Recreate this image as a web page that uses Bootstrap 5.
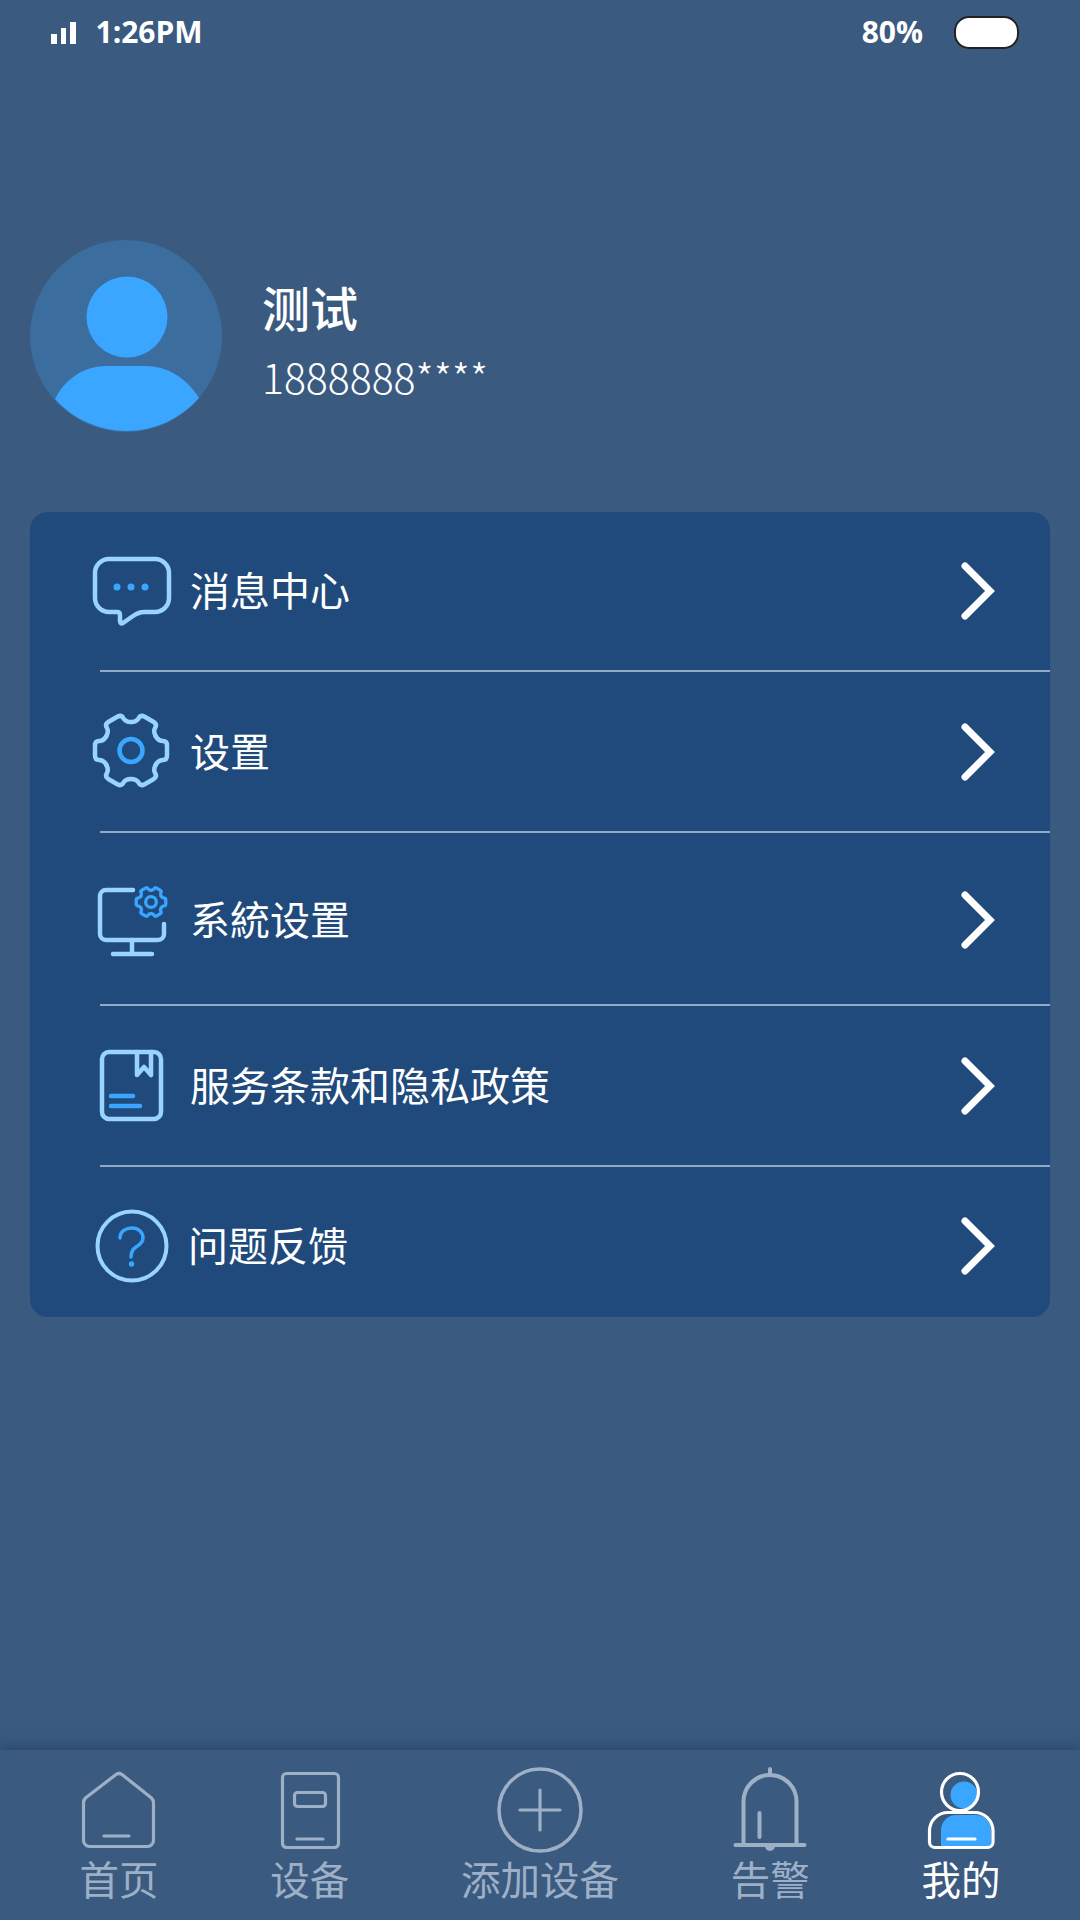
<!DOCTYPE html>
<html lang="zh-CN">
<head>
<meta charset="utf-8">
<title>我的</title>
<link href="https://cdn.jsdelivr.net/npm/bootstrap@5.3.0/dist/css/bootstrap.min.css" rel="stylesheet">
<style>
html,body{margin:0;padding:0}
body{width:1080px;height:1920px;background:#3a5a80;color:#fff;font-family:"Noto Sans CJK SC","Noto Sans",sans-serif;overflow:hidden}
.status-strip{height:62px;padding:2px 61px 0 51px;font-family:"Open Sans","Noto Sans",sans-serif;font-weight:700;font-size:30px;line-height:1}
.sig-bars{height:22px;gap:4px;margin-right:20px;margin-top:1px}
.sig-bars i{display:block;width:5.5px;background:#fff}
.sig-a{height:10px}.sig-b{height:16px}.sig-c{height:22px}
.batt{width:65px;height:33px;background:#fff;border:2px solid #222;border-radius:15px;margin-left:31px}
.profile{margin:178px 30px 0;height:192px}
.avatar-svg{display:block;flex:none}
.who{margin-left:40px;padding-top:6px}
.who-name{font-size:48px;font-weight:500;line-height:58px;margin-top:0}
.who-tel{font-size:41px;font-weight:300;line-height:50px;margin-top:16px}
.menu-panel{margin:80px 30px 0;background:#204a7b;border-radius:18px;overflow:hidden}
.menu-row{padding:0 50px 0 60px}
.h-top{height:158px}.h-a{height:159px}.h-b{height:171px;padding-top:2px}.h-c{height:159px}.h-d{height:150px;padding-top:8px}
.menu-icon{display:block;width:82px;height:80px;flex:none;fill:none;stroke:#99d3ff;stroke-width:4.5;stroke-linecap:round;stroke-linejoin:round}
.accent{stroke:#3aa6ff}
.accent-fill{fill:#3aa6ff;stroke:none}
.menu-text{margin-left:18px;margin-bottom:4px;font-size:40px;line-height:50px;flex:1}
.text-tight{margin-left:16px}
.menu-arrow{display:block;width:40px;height:60px;flex:none;fill:none;stroke:#fff;stroke-width:7;stroke-linecap:round;stroke-linejoin:miter}
.menu-sep{height:2px;margin-left:70px;background:#93a9c4}
.tab-strip{height:170px;padding:16px 79.5px 0;background:#3a5a80;box-shadow:0 -2px 14px rgba(24,48,80,.55)}
.tab-cell{color:#9eb0c6;font-size:39.5px;line-height:50px;white-space:nowrap}
.tab-cell span{margin-top:-3px}
.tab-on{color:#fff}
.tab-icon{display:block;width:90px;height:90px;margin:0 -6px;fill:none;stroke:#9eb0c6;stroke-width:3.2;stroke-linecap:round;stroke-linejoin:round}
.tab-on .tab-icon{stroke:#fff}
.pusher{flex:1}
</style>
</head>
<body class="d-flex flex-column">
<div class="status-strip d-flex align-items-center">
  <div class="sig-bars d-flex align-items-end"><i class="sig-a"></i><i class="sig-b"></i><i class="sig-c"></i></div>
  <span>1:26PM</span>
  <span class="ms-auto">80%</span>
  <div class="batt"></div>
</div>

<div class="profile d-flex align-items-center">
  <svg class="avatar-svg" width="192" height="192" viewBox="0 0 192 192">
    <circle cx="96" cy="96" r="96" fill="#3b6d9e"/>
    <circle cx="97" cy="77" r="40.5" fill="#3aa6ff"/>
    <path d="M25 159C36 137 56 126 76 126H116C136 126 156 137 169 158A96 96 0 0 1 25 159Z" fill="#3aa6ff"/>
  </svg>
  <div class="who">
    <div class="who-name">测试</div>
    <div class="who-tel">1888888****</div>
  </div>
</div>

<div class="menu-panel">
  <div class="menu-row h-top d-flex align-items-center">
    <svg class="menu-icon" viewBox="0 0 82 80">
      <g transform="translate(0 1)">
      <path d="M19 7H65a14 14 0 0 1 14 14V46a14 14 0 0 1-14 14H54c-4 0-8 2-11 4L33 71c-2 1-3 0-3-2V63c0-2-1-3-3-3H19A14 14 0 0 1 5 46V21A14 14 0 0 1 19 7Z"/>
      <circle class="accent-fill" cx="27" cy="35" r="3.5"/><circle class="accent-fill" cx="41" cy="35" r="3.5"/><circle class="accent-fill" cx="55" cy="35" r="3.5"/>
      </g>
    </svg>
    <span class="menu-text">消息中心</span>
    <svg class="menu-arrow" viewBox="0 0 40 60"><path d="M5 5L30 30L5 55"/></svg>
  </div>
  <div class="menu-sep"></div>
  <div class="menu-row h-a d-flex align-items-center">
    <svg class="menu-icon" viewBox="0 0 82 80">
      <g transform="translate(41 38.500)">
        <path id="tooth" d="M24.700-14.250C26.700-10.800 29-9.500 32-9.500Q36-9.500 36-5V5Q36 9.500 32 9.500C29 9.500 26.700 10.800 24.700 14.250"/>
        <use href="#tooth" transform="rotate(60)"/><use href="#tooth" transform="rotate(120)"/><use href="#tooth" transform="rotate(180)"/><use href="#tooth" transform="rotate(240)"/><use href="#tooth" transform="rotate(300)"/>
        <circle class="accent" r="11.500"/>
      </g>
    </svg>
    <span class="menu-text">设置</span>
    <svg class="menu-arrow" viewBox="0 0 40 60"><path d="M5 5L30 30L5 55"/></svg>
  </div>
  <div class="menu-sep"></div>
  <div class="menu-row h-b d-flex align-items-center">
    <svg class="menu-icon" viewBox="0 0 82 80">
      <path d="M43 10H16a6 6 0 0 0-6 6V54a6 6 0 0 0 6 6H68a6 6 0 0 0 6-6V44"/>
      <path d="M42 60V73M23 74H62"/>
      <g transform="translate(61 22) scale(.41)" class="accent" stroke-width="8">
        <path id="cog" d="M24.700-14.250C26.700-10.800 29-9.500 32-9.500Q36-9.500 36-5V5Q36 9.500 32 9.500C29 9.500 26.700 10.800 24.700 14.250"/>
        <use href="#cog" transform="rotate(60)"/><use href="#cog" transform="rotate(120)"/><use href="#cog" transform="rotate(180)"/><use href="#cog" transform="rotate(240)"/><use href="#cog" transform="rotate(300)"/>
        <circle r="13"/>
      </g>
    </svg>
    <span class="menu-text">系統设置</span>
    <svg class="menu-arrow" viewBox="0 0 40 60"><path d="M5 5L30 30L5 55"/></svg>
  </div>
  <div class="menu-sep"></div>
  <div class="menu-row h-c d-flex align-items-center">
    <svg class="menu-icon" viewBox="0 0 82 80">
      <rect x="12" y="6" width="59" height="67" rx="7"/>
      <path d="M47 6V29L54 21L61 29V6"/>
      <path class="accent" d="M21 50H43M21 60H50"/>
    </svg>
    <span class="menu-text">服务条款和隐私政策</span>
    <svg class="menu-arrow" viewBox="0 0 40 60"><path d="M5 5L30 30L5 55"/></svg>
  </div>
  <div class="menu-sep"></div>
  <div class="menu-row h-d d-flex align-items-center">
    <svg class="menu-icon" viewBox="0 0 82 80">
      <circle cx="42" cy="40" r="34.500" stroke-width="4"/>
      <path class="accent" d="M30 32C30 25 36 22 42 22C48 22 53 26 53 32C53 37 49 39 46 41C43 43 41 45 41 51" stroke-width="3.500"/>
      <circle class="accent-fill" cx="41.500" cy="58" r="2.700"/>
    </svg>
    <span class="menu-text text-tight">问题反馈</span>
    <svg class="menu-arrow" viewBox="0 0 40 60"><path d="M5 5L30 30L5 55"/></svg>
  </div>
</div>

<div class="pusher"></div>

<nav class="tab-strip d-flex justify-content-between">
  <div class="tab-cell d-flex flex-column align-items-center">
    <svg class="tab-icon" viewBox="0 0 90 90">
      <path d="M9.500 37q0-3 2-5L42 8.500q3-2 6 0L77.500 32q2 2 2 5V74.500a6 6 0 0 1-6 6H15.500a6 6 0 0 1-6-6Z"/>
      <path d="M30 70H55"/>
    </svg>
    <span>首页</span>
  </div>
  <div class="tab-cell d-flex flex-column align-items-center">
    <svg class="tab-icon" viewBox="0 0 90 90">
      <rect x="17.500" y="7.500" width="56" height="74" rx="4"/>
      <rect x="29.500" y="26.500" width="31" height="14" rx="3"/>
      <path d="M32 73H58"/>
    </svg>
    <span>设备</span>
  </div>
  <div class="tab-cell d-flex flex-column align-items-center">
    <svg class="tab-icon" viewBox="0 0 90 90">
      <circle cx="45" cy="44" r="41" stroke-width="3.600"/>
      <path d="M25 44H65M45 24V64"/>
    </svg>
    <span>添加设备</span>
  </div>
  <div class="tab-cell d-flex flex-column align-items-center">
    <svg class="tab-icon" viewBox="0 0 90 90">
      <path d="M18.500 79V35.500a26.500 26.500 0 0 1 53 0V79" stroke-width="4"/>
      <path d="M10.500 79H79.500M45 3V8M34.500 47V71" stroke-width="4"/>
      <path d="M40 80a5 5 0 0 0 10 0Z" fill="#9eb0c6" stroke="none"/>
    </svg>
    <span>告警</span>
  </div>
  <div class="tab-cell tab-on d-flex flex-column align-items-center">
    <svg class="tab-icon" viewBox="0 0 90 90">
      <circle class="accent-fill" cx="48" cy="29" r="13.500"/>
      <path class="accent-fill" d="M25 82V64a15 15 0 0 1 15-15H60a15 15 0 0 1 15 15V82Z"/>
      <circle cx="44" cy="26" r="18.500"/>
      <path d="M13.500 65a18.500 18.500 0 0 1 18.500-18.500H58.500a18.500 18.500 0 0 1 18.500 18.500V76a5.500 5.500 0 0 1-5.500 5.500H19a5.500 5.500 0 0 1-5.500-5.500Z"/>
      <path d="M32 73H59"/>
    </svg>
    <span>我的</span>
  </div>
</nav>
</body>
</html>
